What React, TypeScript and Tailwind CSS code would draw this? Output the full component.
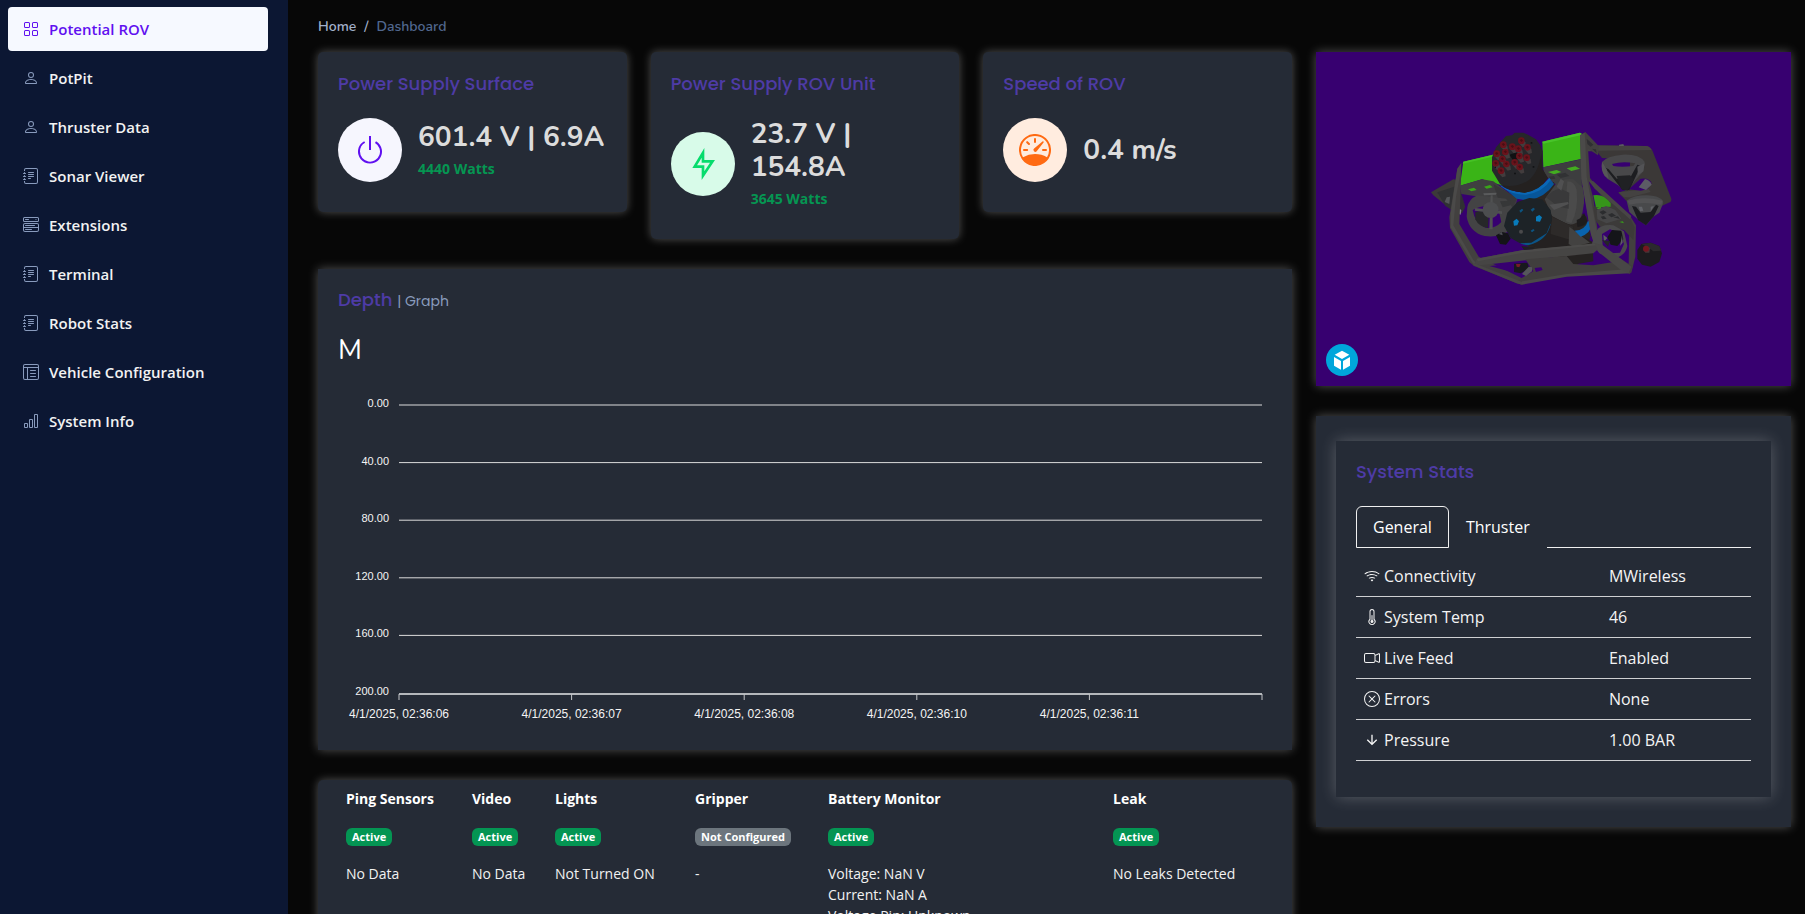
import type { ReactNode } from "react";
import {
  BsBarChart,
  BsCameraVideo,
  BsGrid,
  BsJournalText,
  BsLayoutTextWindowReverse,
  BsMenuButtonWide,
  BsPerson,
  BsPower,
  BsSpeedometer,
  BsThermometerHalf,
  BsWifi,
  BsXCircle,
} from "react-icons/bs";

const navItems = [
  { label: "Potential ROV", icon: BsGrid, active: true },
  { label: "PotPit", icon: BsPerson },
  { label: "Thruster Data", icon: BsPerson },
  { label: "Sonar Viewer", icon: BsJournalText },
  { label: "Extensions", icon: BsMenuButtonWide },
  { label: "Terminal", icon: BsJournalText },
  { label: "Robot Stats", icon: BsJournalText },
  { label: "Vehicle Configuration", icon: BsLayoutTextWindowReverse },
  { label: "System Info", icon: BsBarChart },
];

function Sidebar() {
  return (
    <aside className="sticky top-0 h-screen w-72 shrink-0 bg-[#0c1733] pt-[7px] pr-5 pl-2">
      <nav>
        <ul className="flex flex-col gap-[5px]">
          {navItems.map(({ label, icon: Icon, active }) => (
            <li key={label}>
              <a
                href="#"
                className={
                  active
                    ? "flex h-11 items-center gap-2.5 rounded bg-[#f6f9ff] px-[15px] text-[15px] font-semibold text-[#6010f0]"
                    : "flex h-11 items-center gap-2.5 rounded px-[15px] text-[15px] font-semibold text-[#f2f2f2]"
                }
              >
                <Icon size={16} className={active ? "text-[#6010f0]" : "text-[#899bbd]"} />
                {label}
              </a>
            </li>
          ))}
        </ul>
      </nav>
    </aside>
  );
}

function CardTitle({ children }: { children: ReactNode }) {
  return (
    <h2 className="font-['Poppins','Inter',sans-serif] text-[18px] leading-[22px] font-medium text-[#4e3ba6]">
      {children}
    </h2>
  );
}

function BoltIcon() {
  return (
    <svg width="32" height="32" viewBox="0 0 24 24" fill="currentColor" aria-hidden="true">
      <path d="M13 9h8L11 24v-9H4l9-15v9zm-2 2V7.22L7.532 13H13v4.394L17.263 11H11z" />
    </svg>
  );
}

function ArrowDownIcon({ size }: { size: number }) {
  return (
    <svg width={size} height={size} viewBox="0 0 24 24" fill="currentColor" aria-hidden="true">
      <path d="M13 16.172l5.364-5.364 1.414 1.414L12 20l-7.778-7.778 1.414-1.414L11 16.172V4h2v12.172z" />
    </svg>
  );
}

function StatCard({
  title,
  value,
  note,
  icon,
  tone,
}: {
  title: string;
  value: string;
  note?: string;
  icon: ReactNode;
  tone: string;
}) {
  return (
    <section className="rounded-[5px] bg-[#252b36] px-5 pt-[21px] pb-[30px] shadow-[0_0_10px_rgba(255,255,255,0.3)]">
      <CardTitle>{title}</CardTitle>
      <div className="mt-[23px] flex items-center">
        <div className={`flex size-16 shrink-0 items-center justify-center rounded-full ${tone}`}>{icon}</div>
        <div className="pl-4">
          <p className="font-['Nunito','Open_Sans',sans-serif] text-[28px] leading-[33px] font-bold text-[#dcdcdc]">
            {value}
          </p>
          {note && <p className="pt-1 text-[14px] leading-[21px] font-bold text-[#059652]">{note}</p>}
        </div>
      </div>
    </section>
  );
}

const depthTicks = ["0.00", "40.00", "80.00", "120.00", "160.00", "200.00"];
const timeTicks = [
  "4/1/2025, 02:36:06",
  "4/1/2025, 02:36:07",
  "4/1/2025, 02:36:08",
  "4/1/2025, 02:36:10",
  "4/1/2025, 02:36:11",
];

function DepthChart() {
  return (
    <svg
      className="h-[340px] w-full overflow-visible font-['Liberation_Sans',Arial,sans-serif] text-[11px]"
      role="img"
      aria-label="Depth in metres"
    >
      {depthTicks.map((t, i) => (
        <text key={t} x="51" y={20 + i * 57.6 + 2} textAnchor="end" fill="#f4f4f4">
          {t}
        </text>
      ))}
      <svg x="61" y="0" className="w-[calc(100%-71px)] overflow-visible">
        {depthTicks.slice(0, 5).map((t, i) => (
          <line key={t} x1="0" x2="100%" y1={20 + i * 57.6} y2={20 + i * 57.6} stroke="#dcdcdc" />
        ))}
        <line x1="0" x2="100%" y1="309" y2="309" stroke="#b4b7bb" strokeWidth="2" />
        {[0, 20, 40, 60, 80, 100].map((p) => (
          <line key={p} x1={`${p}%`} x2={`${p}%`} y1="309" y2="315" stroke="#c4c6c9" />
        ))}
        {timeTicks.map((t, i) => (
          <text key={t} x={`${i * 20}%`} y="333" textAnchor="middle" fill="#f4f4f4" className="text-[12px]">
            {t}
          </text>
        ))}
      </svg>
    </svg>
  );
}

function Badge({ muted, children }: { muted?: boolean; children: ReactNode }) {
  return (
    <span
      className={
        muted
          ? "inline-block rounded-md bg-[#6c757d] px-1.5 text-[11px] leading-[18px] font-bold whitespace-nowrap text-white"
          : "inline-block rounded-md bg-[#049553] px-1.5 text-[11px] leading-[18px] font-bold whitespace-nowrap text-white"
      }
    >
      {children}
    </span>
  );
}

const modules = [
  { name: "Ping Sensors", status: "Active", lines: ["No Data"] },
  { name: "Video", status: "Active", lines: ["No Data"] },
  { name: "Lights", status: "Active", lines: ["Not Turned ON"] },
  { name: "Gripper", status: "Not Configured", lines: ["-"] },
  {
    name: "Battery Monitor",
    status: "Active",
    lines: ["Voltage: NaN V", "Current: NaN A", "Voltage Pin: Unknown"],
  },
  { name: "Leak", status: "Active", lines: ["No Leaks Detected"] },
];

function ModulesTable() {
  return (
    <section className="rounded-[5px] bg-[#252b36] px-5 pb-5 shadow-[0_0_10px_rgba(255,255,255,0.3)]">
      <table className="w-full table-fixed text-left text-[14px] leading-[21px] text-[#f2f2f2]">
        <colgroup>
          <col className="w-[126px]" />
          <col className="w-[83px]" />
          <col className="w-[140px]" />
          <col className="w-[133px]" />
          <col className="w-[285px]" />
          <col />
        </colgroup>
        <thead>
          <tr className="h-9">
            {modules.map((m) => (
              <th key={m.name} scope="col" className="px-2 font-bold text-white">
                {m.name}
              </th>
            ))}
          </tr>
        </thead>
        <tbody>
          <tr className="h-[39px]">
            {modules.map((m) => (
              <td key={m.name} className="px-2">
                <Badge muted={m.status !== "Active"}>{m.status}</Badge>
              </td>
            ))}
          </tr>
          <tr>
            {modules.map((m) => (
              <td key={m.name} className="px-2 py-2 align-top">
                {m.lines.map((l) => (
                  <div key={l}>{l}</div>
                ))}
              </td>
            ))}
          </tr>
        </tbody>
      </table>
    </section>
  );
}

const connectorPins = [
  [310, 104], [364, 92], [290, 131], [316, 126], [337, 110], [355, 116], [382, 112], [307, 147],
  [287, 160], [319, 162], [344, 157], [358, 138], [380, 143], [359, 171], [303, 182],
];

function RovModel() {
  return (
    <svg viewBox="-252 -174 1425 1002" className="h-full w-full" role="img" aria-label="3D model of the ROV">
      {/* rear left arm and thruster */}
      <path d="M93 247 L160 208 L180 212 L180 228 L112 249 L160 272 L155 300 L100 256 Z" fill="#3c3a39" />
      <path d="M112 247 L176 226 L196 290 L186 310 L160 302 L136 288 Z" fill="#303133" />
      <path d="M140 262 L150 260 L148 282 L134 276 Z" fill="#55575a" />
      <path d="M178 296 L184 300 L182 314 L176 312 Z" fill="#808288" />

      {/* rear right plate */}
      <path
        d="M556 106 L738 108 Q752 110 758 124 L814 266 Q815 276 806 278 L780 290 L680 274 L655 248 L690 236 L690 150 L606 144 L590 124 L560 124 Z"
        fill="#3b3837"
      />
      <path d="M556 106 L738 108 Q750 109 755 120 L600 122 L560 124 Z" fill="#454342" />
      <path d="M655 247 L745 236 L752 246 L690 262 L672 262 Z" fill="#444241" />
      <path d="M686 238 L722 206 Q748 202 755 220 L742 238 L722 242 Z" fill="#370070" />
      <path d="M716 232 L735 207 Q750 210 755 224 L738 240 Z" fill="#5c5c65" />
      <path d="M657 104 L670 102 L672 108 L657 108 Z" fill="#5a5a60" />

      {/* upper right thruster */}
      <path
        fillRule="evenodd"
        d="M606 156 Q620 138 668 134 Q718 132 734 156 L730 184 L706 210 L680 244 L652 224 L622 206 Q602 188 606 156 Z
           M636 162 Q668 152 706 160 L700 168 Q664 172 640 168 Z"
        fill="#48484a"
      />
      <path d="M614 172 L626 178 L650 206 L690 204 L712 164 L722 168 L704 206 L688 240 L668 240 L650 218 Z" fill="#1c1d20" />
      <path d="M650 198 L690 196 L702 208 L682 242 L664 238 Z" fill="#202124" />
      <path d="M606 156 Q602 180 614 198 L626 206 L620 178 Z" fill="#565658" />
      <path d="M712 170 L734 160 L730 184 L714 196 Z" fill="#525255" />

      {/* lower right thruster */}
      <path d="M680 272 Q700 256 740 256 Q786 258 790 278 L778 308 L760 320 L738 346 L716 330 L688 306 Z" fill="#48494b" />
      <path d="M696 288 L708 290 L722 308 L752 306 L768 284 L776 288 L762 318 L738 346 L714 330 Z" fill="#1b1c1f" />
      <path d="M682 272 Q730 258 788 272 L784 284 Q730 274 688 284 Z" fill="#525254" />
      <path d="M716 290 L726 290 L730 302 L720 304 Z M752 290 L762 288 L752 304 Z" fill="#616368" />

      {/* buoyancy foam */}
      <path d="M190 155 L285 133 L312 228 L246 208 L180 227 Z" fill="#3ab417" />
      <path d="M190 155 L285 133 L287 138 L188 161 Z" fill="#47c226" />
      <path d="M427 95 L540 68 L550 74 L546 146 L430 172 Z" fill="#3ab417" />
      <path d="M427 95 L540 68 L548 74 L430 101 Z" fill="#49c42a" />

      {/* undersides of the foam */}
      <path d="M180 227 L246 208 L280 214 L352 268 L340 306 L330 320 L238 260 L184 252 Z" fill="#3f3f40" />
      <path d="M280 222 L352 264 L330 310 L326 360 L306 350 L300 284 Z" fill="#373738" />
      <path d="M204 238 L222 233 L230 240 L214 244 Z M252 230 L270 225 L278 232 L260 236 Z M322 300 L332 296 L332 306 Z" fill="#3aa519" />
      <path d="M430 172 L544 148 L546 236 L500 214 L470 226 L432 194 Z" fill="#3d3e3f" />
      <path d="M444 186 L470 180 L484 186 L462 193 Z M500 175 L526 169 L540 176 L514 183 Z" fill="#43ad20" />
      <path d="M470 194 L496 188 L508 198 L482 204 Z M446 200 L462 198 L466 206 L452 208 Z" fill="#313234" />

      {/* left thruster */}
      <path
        fillRule="evenodd"
        d="M202 292 Q206 268 232 256 L318 266 L336 290 L330 360 Q300 384 254 378 Q208 366 200 320 Z
           M218 300 Q224 340 258 354 Q286 356 304 336 L296 300 Q262 276 218 300 Z"
        fill="#434344"
      />
      <path d="M226 306 Q250 296 266 316 L264 354 Q236 350 226 328 Z" fill="#262729" />
      <path d="M272 256 L278 256 L278 358 L268 358 Z M226 294 L306 304 L306 312 L224 302 Z" fill="#505152" />
      <circle cx="272" cy="300" r="24" fill="#4c4d4f" />
      <path d="M300 274 L330 272 L332 286 L308 292 Z" fill="#363738" />
      <path d="M250 250 L290 248 L288 254 L252 256 Z" fill="#5a5b5c" />

      {/* main hull */}
      <path d="M398 230 L462 216 L470 260 L560 320 L572 380 L530 470 L400 420 L340 380 Z" fill="#2a2624" />
      <path d="M300 224 Q330 248 376 246 Q420 238 448 204 L462 222 Q436 262 384 272 L350 266 Z" fill="#07569a" />
      <path d="M300 224 Q330 248 376 246 Q420 238 448 204 L452 210 Q430 246 378 254 Q334 254 304 230 Z" fill="#0a68b6" />
      <path
        d="M318 78 L336 76 L344 68 L370 68 L384 74 L408 88 L420 104 L428 124 L428 178 L442 204 Q420 240 374 248 Q330 246 300 222 L276 182 L276 142 L288 112 Z"
        fill="#26272a"
      />
      <path d="M424 130 L428 178 L444 204 Q420 242 374 248 Q330 246 304 226 Q350 234 384 212 Q414 192 424 130 Z" fill="#242120" />
      <path d="M328 134 L352 126 L366 142 L340 152 Z" fill="#101113" />
      {connectorPins.map(([x, y]) => (
        <g key={`${x}-${y}`}>
          <path d={`M${x} ${y - 9} l12 14 l2 12 l-10 3 l-12 -14 Z`} fill="#423c3d" />
          <circle cx={x} cy={y} r="10" fill="#69131b" />
          <path d={`M${x - 5} ${y - 2} l6 -3 l4 5 l-5 4 Z`} fill="#480e14" />
        </g>
      ))}
      <path d="M284 170 h4 v4 h-4 Z M342 188 h6 v5 h-6 Z M392 96 h5 v5 h-5 Z M398 168 h5 v5 h-5 Z" fill="#121315" />

      {/* central thruster */}
      <path d="M466 224 Q486 204 520 208 L548 232 Q560 280 540 330 Q520 350 496 340 L456 318 L434 268 Z" fill="#424242" />
      <path d="M502 214 Q524 214 530 240 Q536 300 514 340 L498 334 Q508 290 500 240 Z" fill="#4b4b4b" />
      <path d="M438 262 Q458 238 482 236 L508 248 L506 296 L476 290 Z" fill="#39393a" />
      <path d="M482 206 L470 230 L484 242 L492 214 Z M448 284 L504 276 L506 282 L462 300 Z" fill="#505051" />

      {/* front tube with camera dome */}
      <path d="M438 282 L456 320 L520 350 L508 408 L434 420 L372 402 Z" fill="#242121" />
      <path d="M456 320 L520 350 L512 390 L452 372 Z" fill="#2d2a29" />
      <path d="M516 360 L578 396 L580 454 L520 464 L488 444 Z" fill="#252221" />
      <path d="M508 350 L570 398 L520 410 L506 402 Z" fill="#434241" />
      <path d="M524 362 Q556 360 564 332 L576 342 Q572 370 542 380 Z" fill="#0963ae" />
      <path d="M530 330 Q548 322 552 308 L562 334 Q552 352 532 350 Z" fill="#1d1c1d" />
      <path d="M452 342 Q442 392 384 406 Q362 404 358 396 Q430 392 448 340 Z" fill="#0b5487" />
      <path
        d="M322 308 L352 276 L388 264 L426 268 L452 300 L456 330 L440 370 L394 398 L360 400 L332 384 L312 348 Z"
        fill="#1d2327"
      />
      <path d="M340 334 L350 326 L357 334 L352 346 L342 347 Z M408 320 L418 315 L426 322 L420 335 L408 334 Z" fill="#087bbb" />
      <path d="M358 302 l8 -6 l4 4 l-8 8 Z M392 299 l8 -6 l5 4 l-8 8 Z M392 362 l8 -5 l4 4 l-8 6 Z" fill="#0d5480" />
      <circle cx="363" cy="365" r="6" fill="#49494b" />

      {/* small left lamp */}
      <path d="M288 376 L306 366 L324 370 L332 386 L318 404 L300 402 Z" fill="#141418" />
      <path d="M296 372 L306 366 L308 376 Z" fill="#4c4e54" />

      {/* right frame */}
      <path
        fillRule="evenodd"
        d="M540 76 L556 66 L596 108 L594 136 L564 116 L570 204 L592 232 L692 320 L708 346 L706 440 L694 488 L682 490 L588 410 L574 376 L544 200 Z
           M566 214 L580 264 L594 370 L604 408 L686 462 L688 350 L672 332 Z"
        fill="#42403f"
      />
      <path d="M540 76 L554 68 L556 100 L560 200 L588 350 L600 410 L684 486 L676 486 L584 408 L572 370 L544 206 Z" fill="#4b4a49" />
      <path d="M560 86 L580 104 L572 110 L562 102 Z M576 116 L588 118 L590 130 Z" fill="#2f2f32" />
      <path d="M568 214 L580 290 L636 278 L690 324 L704 352 L700 390 L672 360 L600 350 L586 330 Z" fill="#3c3a39" />
      <path d="M580 256 Q610 250 632 280 L632 290 L588 292 Z" fill="#36951a" />
      <path d="M566 210 L580 214 L694 318 L690 328 L632 276 L584 236 Z" fill="#484645" />
      <path d="M590 300 L618 288 L646 300 L664 326 L620 340 L592 328 Z" fill="#464647" />
      <path d="M598 306 l12 -5 l10 6 l-12 7 Z M624 314 l12 -5 l12 8 l-14 5 Z M640 322 l14 -3 l6 8 Z M602 320 l10 -2 l8 8 l-12 2 Z" fill="#2b2c2e" />
      <path d="M590 294 l12 -4 l2 5 l-10 3 Z M658 336 l10 -2 l4 6 Z" fill="#38a01b" />

      {/* lower right inner thruster */}
      <path
        fillRule="evenodd"
        d="M590 362 Q602 342 640 346 L672 364 L682 408 Q676 440 640 444 L598 430 L576 400 Z
           M606 372 L608 406 L632 430 L660 428 L672 402 L660 370 L630 358 Z"
        fill="#4a4a4b"
      />
      <path d="M622 382 L636 360 L664 362 L670 388 L652 408 L632 404 Z" fill="#141519" />
      <path d="M610 374 L622 384 L612 396 Z M666 376 L668 398 L660 408 Z" fill="#5c5e61" />
      <path d="M606 390 L630 394 L624 410 Z" fill="#252529" />

      {/* left frame */}
      <path
        d="M172 176 L184 158 L182 238 L178 342 L236 440 L372 508 L366 524 L350 520 L222 468 L208 456 L150 354 L148 322 Z"
        fill="#42403f"
      />
      <path d="M172 176 L184 160 L182 186 L168 260 L160 346 L220 450 L234 466 L222 466 L152 352 L152 310 Z" fill="#4b4a49" />

      {/* front lower bars */}
      <path d="M230 446 L370 420 L560 404 L588 400 L596 416 L580 430 L480 440 L240 466 L224 462 Z" fill="#464544" />
      <path d="M230 446 L370 420 L588 400 L590 406 L370 428 L234 454 Z" fill="#4c4b4a" />
      <path d="M376 448 L500 438 L520 462 L580 466 L640 456 L700 466 L690 492 L674 484 L500 498 L366 520 L348 514 L400 484 Z" fill="#403e3d" />
      <path d="M366 514 L500 492 L678 478 L690 490 L500 500 L366 524 Z" fill="#4a4948" />
      <path d="M584 400 L606 404 L694 470 L686 490 L660 478 L598 428 Z" fill="#484746" />
      <path d="M582 430 L594 428 L628 456 L582 462 Z" fill="#370070" />
      <path d="M268 468 L342 461 L344 488 Z M404 474 L424 472 L428 480 L408 486 Z" fill="#370070" />
      <path d="M222 460 L366 516 L366 524 L350 520 L220 466 Z" fill="#484746" />

      {/* small payload under the frame */}
      <path d="M342 461 L382 458 L388 476 L362 490 L342 486 Z" fill="#18191d" />
      <path d="M348 462 l14 0 l-4 10 l-8 -2 Z" fill="#791a27" />
      <path d="M366 492 L386 470 L396 472 L396 484 L378 498 Z" fill="#55575a" />
      <path d="M364 408 L404 412 L400 418 L372 420 Z" fill="#202022" />

      {/* detached lamp */}
      <path d="M712 420 L724 402 L752 398 L778 408 L786 430 L778 456 L752 470 L726 464 L712 446 Z" fill="#1c1b1e" />
      <path d="M724 402 L752 398 L778 408 L784 422 L760 424 L744 412 Z" fill="#2b2a2c" />
      <path d="M732 412 l10 -4 l8 6 l-2 14 l-12 0 l-6 -8 Z" fill="#453639" />
      <circle cx="738" cy="416" r="9" fill="#741620" />
    </svg>
  );
}

function ModelPanel() {
  return (
    <section className="relative h-[334px] bg-[#370070] shadow-[0_0_10px_rgba(255,255,255,0.3)]">
      <RovModel />
      <button
        type="button"
        aria-label="Open 3D view"
        className="absolute bottom-2.5 left-2.5 flex size-8 items-center justify-center rounded-full bg-[#00a6db]"
      >
        <svg width="32" height="32" viewBox="0 0 96 96" fill="white" aria-hidden="true">
          <path d="M48 20 L70 32 L48 45 L26 32 Z" />
          <path d="M24 39 L45 51 V77 L24 65 Z" />
          <path d="M72 39 L51 51 V77 L72 65 Z" />
        </svg>
      </button>
    </section>
  );
}

const stats = [
  { label: "Connectivity", value: "MWireless", icon: BsWifi },
  { label: "System Temp", value: "46", icon: BsThermometerHalf },
  { label: "Live Feed", value: "Enabled", icon: BsCameraVideo },
  { label: "Errors", value: "None", icon: BsXCircle },
  { label: "Pressure", value: "1.00 BAR", icon: ArrowDownIcon },
];

function SystemStats() {
  return (
    <section className="bg-[#252b36] px-5 pt-[25px] pb-[30px] shadow-[0_0_10px_rgba(255,255,255,0.3)]">
      <div className="bg-[#252b36] px-5 pt-5 pb-9 shadow-[0_0_15px_rgba(255,255,255,0.24)]">
        <CardTitle>System Stats</CardTitle>
        <div className="mt-[23px] flex text-[16px] leading-6 text-white" role="tablist">
          <button
            type="button"
            role="tab"
            aria-selected="true"
            className="rounded-t-md border border-[#f0f0f0] px-4 py-2"
          >
            General
          </button>
          <button type="button" role="tab" aria-selected="false" className="border border-transparent px-4 py-2">
            Thruster
          </button>
          <div className="flex-1 border-b border-[#f0f0f0]" />
        </div>
        <table className="mt-2 w-full table-fixed text-left text-[16px] leading-6 text-[#f4f4f4]">
          <tbody>
            {stats.map(({ label, value, icon: Icon }) => (
              <tr key={label} className="border-b border-[#cfd0d2]">
                <th scope="row" className="w-[62%] px-2 py-2 font-normal">
                  <span className="flex items-center gap-1">
                    <Icon size={16} />
                    {label}
                  </span>
                </th>
                <td className="px-2 py-2">{value}</td>
              </tr>
            ))}
          </tbody>
        </table>
      </div>
    </section>
  );
}

export default function App() {
  return (
    <div className="flex min-h-screen bg-[#070707] font-['Open_Sans',sans-serif]">
      <Sidebar />
      <main className="min-w-0 flex-1 pt-[17px] pr-3.5 pb-8 pl-[30px]">
        <nav
          aria-label="Breadcrumb"
          className="flex gap-2 font-['Nunito','Open_Sans',sans-serif] text-[14px] leading-5 font-semibold text-[#a3b1cc]"
        >
          <a href="#">Home</a>
          <span>/</span>
          <span className="text-[#51678f]">Dashboard</span>
        </nav>
        <div className="mt-[15px] grid grid-cols-3 items-start gap-6">
          <div className="col-span-2 flex flex-col gap-[30px]">
            <div className="grid grid-cols-3 items-start gap-6">
              <StatCard
                title="Power Supply Surface"
                value="601.4 V | 6.9A"
                note="4440 Watts"
                icon={<BsPower size={32} />}
                tone="bg-[#f6f6fe] text-[#6010f0]"
              />
              <StatCard
                title="Power Supply ROV Unit"
                value="23.7 V | 154.8A"
                note="3645 Watts"
                icon={<BoltIcon />}
                tone="bg-[#d8fbe9] text-[#06dc6c]"
              />
              <StatCard
                title="Speed of ROV"
                value="0.4 m/s"
                icon={<BsSpeedometer size={32} />}
                tone="bg-[#ffecdf] text-[#ff6a12]"
              />
            </div>
            <section className="bg-[#252b36] px-5 pt-5 pb-[25px] shadow-[0_0_10px_rgba(255,255,255,0.3)]">
              <CardTitle>
                Depth <span className="text-[14px] font-normal text-[#899bbd]">| Graph</span>
              </CardTitle>
              <p className="mt-[21px] mb-[18px] font-['Nunito','Open_Sans',sans-serif] text-[28px] leading-[34px] text-white">
                M
              </p>
              <DepthChart />
            </section>
            <ModulesTable />
          </div>
          <div className="flex flex-col gap-[30px]">
            <ModelPanel />
            <SystemStats />
          </div>
        </div>
      </main>
    </div>
  );
}
